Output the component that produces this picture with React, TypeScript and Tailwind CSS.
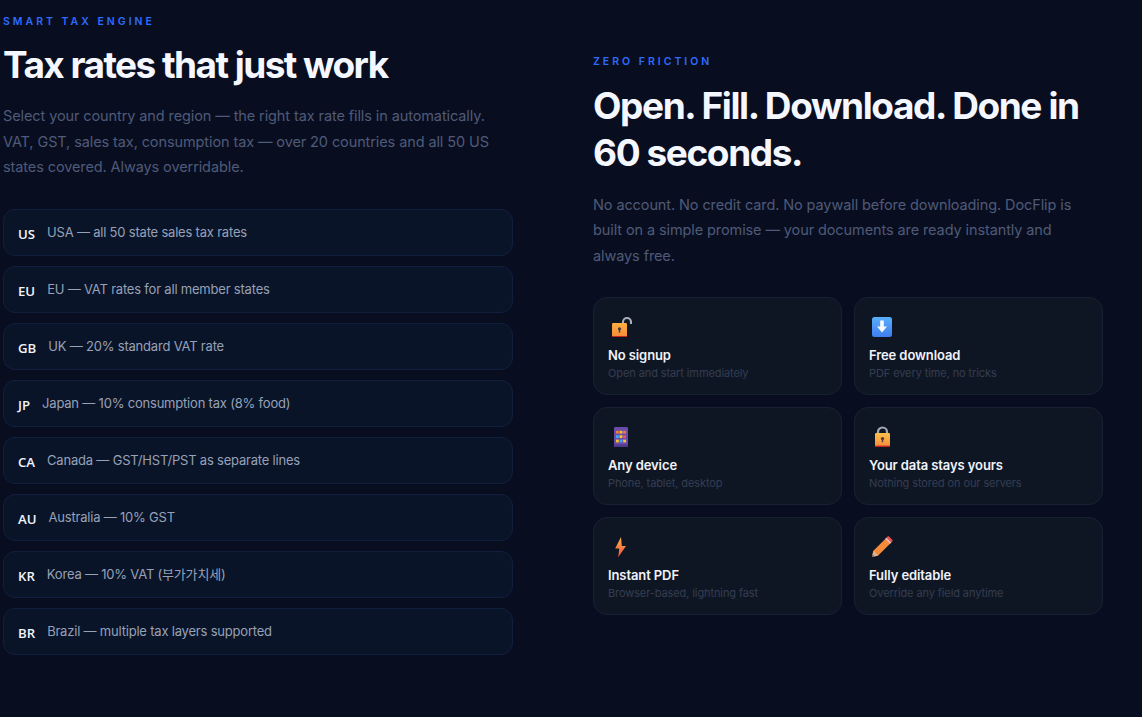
import React from 'react';

const RATES = [
  { code: 'US', text: 'USA — all 50 state sales tax rates' },
  { code: 'EU', text: 'EU — VAT rates for all member states' },
  { code: 'GB', text: 'UK — 20% standard VAT rate' },
  { code: 'JP', text: 'Japan — 10% consumption tax (8% food)' },
  { code: 'CA', text: 'Canada — GST/HST/PST as separate lines' },
  { code: 'AU', text: 'Australia — 10% GST' },
  { code: 'KR', text: 'Korea — 10% VAT (부가가치세)' },
  { code: 'BR', text: 'Brazil — multiple tax layers supported' },
];

function OpenLock() {
  return (
    <svg viewBox="0 0 22 22" className="w-[22px] h-[22px]">
      <defs>
        <linearGradient id="lockA" x1="0" y1="0" x2="0" y2="1">
          <stop offset="0" stopColor="#fbb040" />
          <stop offset="1" stopColor="#f58a3c" />
        </linearGradient>
      </defs>
      <path d="M13 9V6a4 4 0 0 1 8 0v2" fill="none" stroke="#a9adb8" strokeWidth="2.1" />
      <rect x="2" y="7" width="15" height="14" rx="1.2" fill="url(#lockA)" />
      <rect x="2" y="20" width="15" height="1" fill="#c2281f" />
      <circle cx="9.5" cy="12.8" r="1.6" fill="#4a3a3a" />
      <rect x="8.8" y="12.8" width="1.4" height="3.8" fill="#4a3a3a" />
    </svg>
  );
}

function DownloadBox() {
  return (
    <svg viewBox="0 0 22 22" className="w-[22px] h-[22px]">
      <defs>
        <linearGradient id="dlA" x1="0" y1="0" x2="0" y2="1">
          <stop offset="0" stopColor="#59b0fb" />
          <stop offset="1" stopColor="#3f7df0" />
        </linearGradient>
      </defs>
      <rect x="1" y="1" width="20" height="20" rx="2.5" fill="url(#dlA)" />
      <path d="M9.2 4.5h3.6v6h3.2L11 16.5l-5-6h3.2z" fill="#f7f9fc" />
    </svg>
  );
}

function Tablet() {
  const cells = ['#f5793b', '#f9c22e', '#f5793b', '#3fa9f5', '#f9c22e', '#ef4f6b', '#f9c22e', '#3fa9f5', '#f9c22e'];
  return (
    <svg viewBox="0 0 22 22" className="w-[22px] h-[22px]">
      <rect x="4" y="1" width="14" height="20" rx="1.4" fill="#6a4ba8" />
      <rect x="4" y="18.5" width="14" height="2.5" fill="#53398c" />
      {cells.map((c, i) => (
        <rect key={i} x={6 + (i % 3) * 3.6} y={4.8 + Math.floor(i / 3) * 4.4} width="2.8" height="2.8" fill={c} />
      ))}
    </svg>
  );
}

function Lightning() {
  return (
    <svg viewBox="0 0 22 22" className="w-[22px] h-[22px]">
      <defs>
        <linearGradient id="boltA" x1="0" y1="0" x2="0" y2="1">
          <stop offset="0" stopColor="#fdb24a" />
          <stop offset="1" stopColor="#f2503f" />
        </linearGradient>
      </defs>
      <path d="M11 1 5.2 12.4h4.1L8.2 21.3 16 10h-4.2z" fill="url(#boltA)" />
    </svg>
  );
}

function ClosedLock() {
  return (
    <svg viewBox="0 0 22 22" className="w-[22px] h-[22px]">
      <defs>
        <linearGradient id="lockB" x1="0" y1="0" x2="0" y2="1">
          <stop offset="0" stopColor="#fbc04a" />
          <stop offset="1" stopColor="#f58a3c" />
        </linearGradient>
      </defs>
      <path d="M7 8V6a4.5 4.5 0 0 1 9 0v2" fill="none" stroke="#a3a7b2" strokeWidth="2.2" />
      <rect x="4" y="7" width="15" height="14" rx="1.2" fill="url(#lockB)" />
      <rect x="4" y="19.6" width="15" height="1.4" fill="#c2281f" />
      <circle cx="11.5" cy="12.6" r="1.6" fill="#4a3a3a" />
      <rect x="10.8" y="12.6" width="1.4" height="3.6" fill="#4a3a3a" />
    </svg>
  );
}

function Pencil() {
  return (
    <svg viewBox="0 0 22 22" className="w-[22px] h-[22px]">
      <path d="M1 21l1.4-6.2L15 2.2l4.8 4.8L7.2 19.6z" fill="#f58a3c" />
      <path d="M1 21l1.4-6.2 4.8 4.8z" fill="#d9b59a" />
      <path d="M1 21l.6-2.6 2 2z" fill="#6b5560" />
      <path d="M15.6 1.6 16.4.8c.6-.6 1.3-.6 1.9 0l2.9 2.9c.6.6.6 1.3 0 1.9l-.8.8z" fill="#ef4f4f" />
      <path d="M14.2 3l1.4-1.4 4.8 4.8L19 7.8z" fill="#f3b6b0" />
    </svg>
  );
}

const FEATURES = [
  { icon: OpenLock, title: 'No signup', desc: 'Open and start immediately' },
  { icon: DownloadBox, title: 'Free download', desc: 'PDF every time, no tricks' },
  { icon: Tablet, title: 'Any device', desc: 'Phone, tablet, desktop' },
  { icon: ClosedLock, title: 'Your data stays yours', desc: 'Nothing stored on our servers' },
  { icon: Lightning, title: 'Instant PDF', desc: 'Browser-based, lightning fast' },
  { icon: Pencil, title: 'Fully editable', desc: 'Override any field anytime' },
];

const body = "font-['Inter','Noto_Sans_CJK_KR',sans-serif]";
const head = "font-['Inter',sans-serif]";

export default function App() {
  return (
    <div className={`h-[717px] overflow-hidden bg-[#080e20] pl-[3px] ${body}`}>
      <div className="grid grid-cols-[510px_510px] gap-20 items-center pt-[15px]">
        {/* Tax rates */}
        <div>
          <p className="text-[10.5px] leading-[14px] font-semibold tracking-[3px] text-[#2f6bff]">SMART TAX ENGINE</p>
          <h2 className={`mt-[13px] text-[37px] leading-[46px] font-bold tracking-[-1.55px] text-[#f5f7ff] ${head}`}>Tax rates that just work</h2>
          <p className="mt-[15px] text-[14.5px] leading-[25.5px] tracking-[-0.1px] text-[#4f5a78]">
            Select your country and region — the right tax rate fills in automatically.
            VAT, GST, sales tax, consumption tax — over 20 countries and all 50 US
            states covered. Always overridable.
          </p>
          <div className="mt-[29px] flex flex-col gap-[10px]">
            {RATES.map(r => (
              <div key={r.code} className="h-[47px] flex items-center gap-3 px-[14px] pt-[2px] rounded-xl border border-[#111f3e] bg-[#0a1429]">
                <span className="mt-[3px] text-[13.2px] font-semibold text-[#f1f4fa] font-['Open_Sans',sans-serif]">{r.code}</span>
                <span className="text-[13px] tracking-[-0.2px] text-[#97a1b6]">{r.text}</span>
              </div>
            ))}
          </div>
        </div>

        {/* Zero friction */}
        <div>
          <p className="text-[10.5px] leading-[14px] font-semibold tracking-[3px] text-[#2f6bff]">ZERO FRICTION</p>
          <h2 className={`mt-[13px] text-[37px] leading-[47px] font-bold tracking-[-1.4px] text-[#f5f7ff] ${head}`}>Open. Fill. Download. Done in 60 seconds.</h2>
          <p className="mt-[16px] pr-5 text-[14.5px] leading-[25.5px] tracking-[-0.1px] text-[#4f5a78]">
            No account. No credit card. No paywall before downloading. DocFlip is
            built on a simple promise — your documents are ready instantly and
            always free.
          </p>
          <div className="mt-[29px] grid grid-cols-2 gap-x-3 gap-y-3">
            {FEATURES.map(f => {
              const Icon = f.icon;
              return (
                <div key={f.title} className="h-[98px] px-[14px] pt-[18px] rounded-[14px] border border-[#182133] bg-[#0f1623]">
                  <div className="pl-[2px]"><Icon /></div>
                  <h4 className="mt-[8px] text-[13px] leading-[18px] tracking-[-0.1px] font-semibold text-[#f0f3fa]">{f.title}</h4>
                  <p className="text-[11px] leading-[18px] tracking-[-0.1px] text-[#343d52]">{f.desc}</p>
                </div>
              );
            })}
          </div>
        </div>
      </div>
    </div>
  );
}
